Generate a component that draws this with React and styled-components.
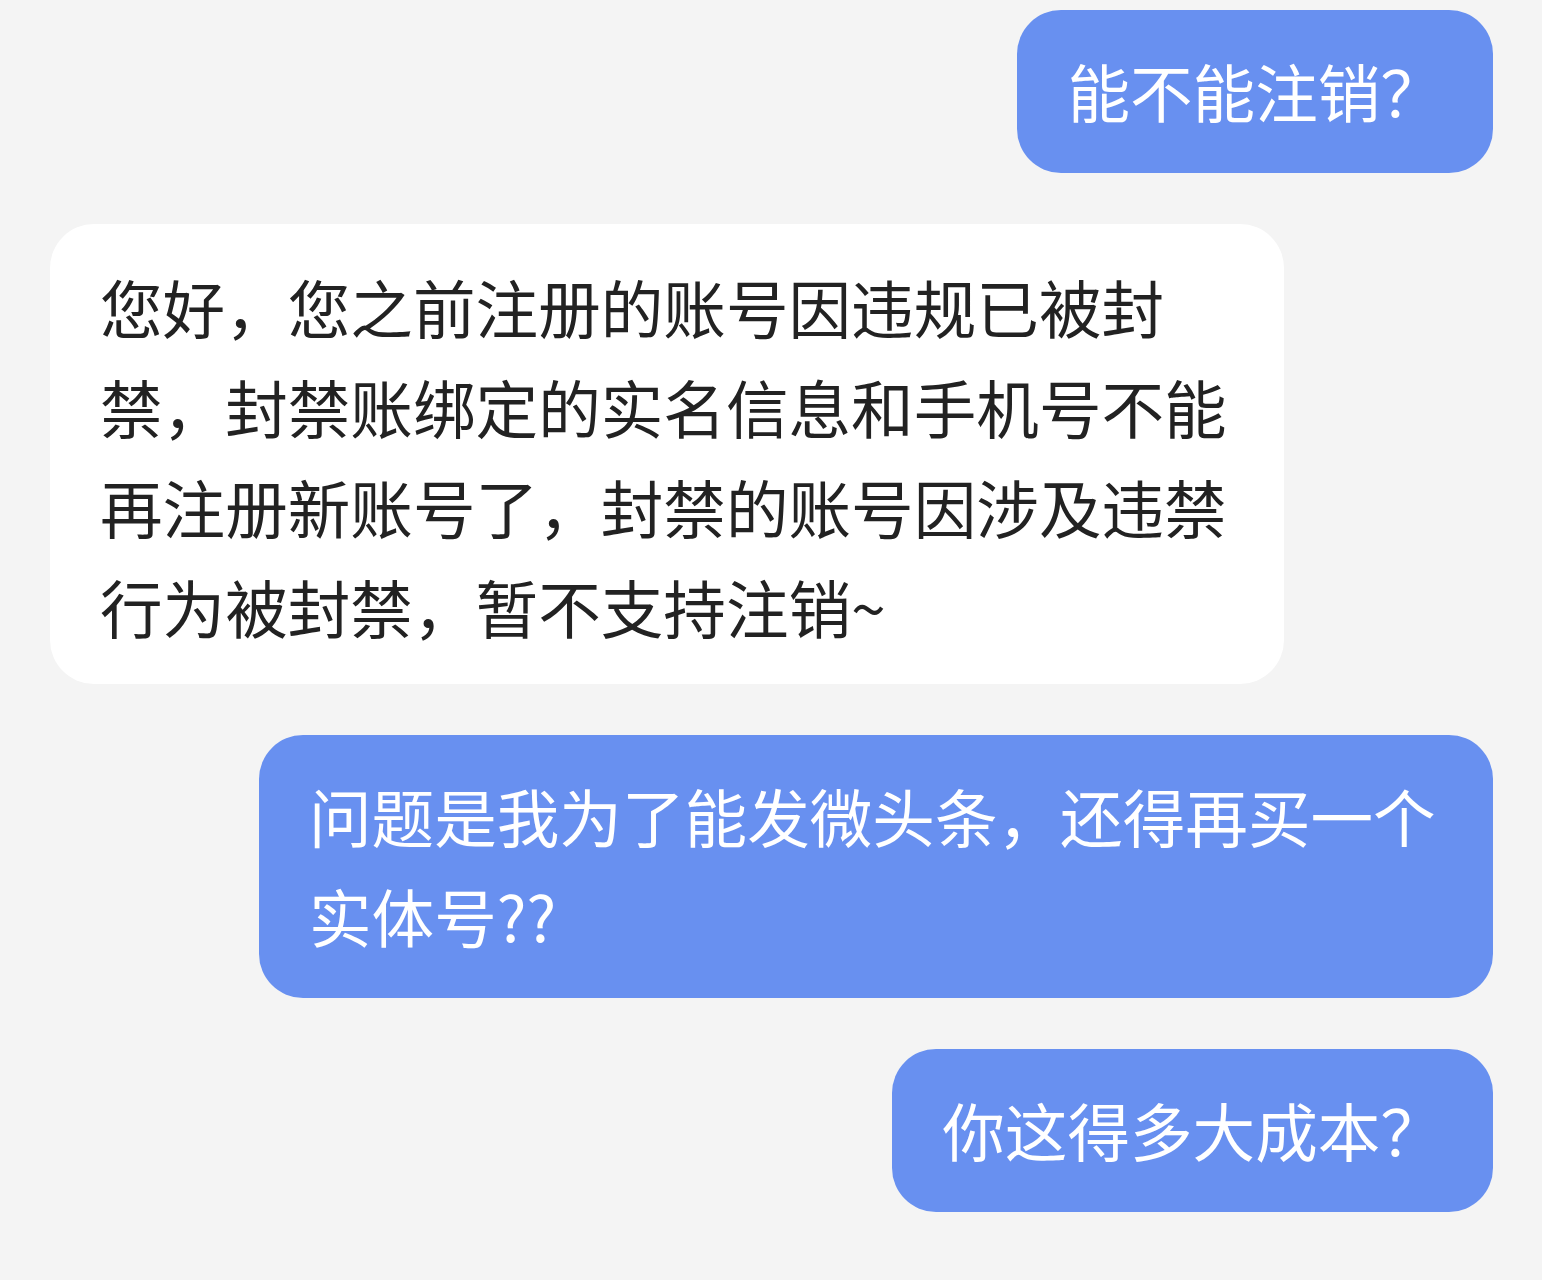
import React from 'react';
import styled, { createGlobalStyle, css } from 'styled-components';

const GlobalStyle = createGlobalStyle`
    html, body {
        margin: 0;
        padding: 0;
        background: #f4f4f4;
    }
    body {
        font-family: "Noto Sans CJK SC", "Noto Sans", sans-serif;
    }
`;

const messages = [
    { id: 1, mine: true, text: '能不能注销？' },
    { id: 2, mine: false, text: '您好，您之前注册的账号因违规已被封禁，封禁账绑定的实名信息和手机号不能再注册新账号了，封禁的账号因涉及违禁行为被封禁，暂不支持注销~' },
    { id: 3, mine: true, text: '问题是我为了能发微头条，还得再买一个实体号??' },
    { id: 4, mine: true, text: '你这得多大成本？' },
];

//Chat thread
function App(){
    return (<>
                <GlobalStyle />
                <Thread>
                    {messages.map(m => (
                        <Row key={m.id} mine={m.mine}>
                            <Bubble mine={m.mine}>{m.text}</Bubble>
                        </Row>
                    ))}
                </Thread>
            </>);
}

const Thread = styled.div`
    min-height: 1280px;
    box-sizing: border-box;
    padding: 10px 49px 40px 50px;
    display: flex;
    flex-direction: column;
    gap: 51px;
    background: #f4f4f4;
`;

const Row = styled.div.withConfig({ shouldForwardProp: p => p !== 'mine' })`
    display: flex;
    justify-content: ${props => props.mine ? 'flex-end' : 'flex-start'};
`;

const Bubble = styled.div.withConfig({ shouldForwardProp: p => p !== 'mine' })`
    box-sizing: border-box;
    max-width: 1234px;
    border-radius: 44px;
    font-size: 62.6px;
    line-height: 100px;
    font-weight: 400;
    word-break: break-all;
    ${props => props.mine ? css`
        padding: 30px 50px 33px 50px;
        background: #6890f0;
        color: #ffffff;
    ` : css`
        padding: 32px 55px 28px 50px;
        background: #ffffff;
        color: #222222;
    `}
`;

export default App;
